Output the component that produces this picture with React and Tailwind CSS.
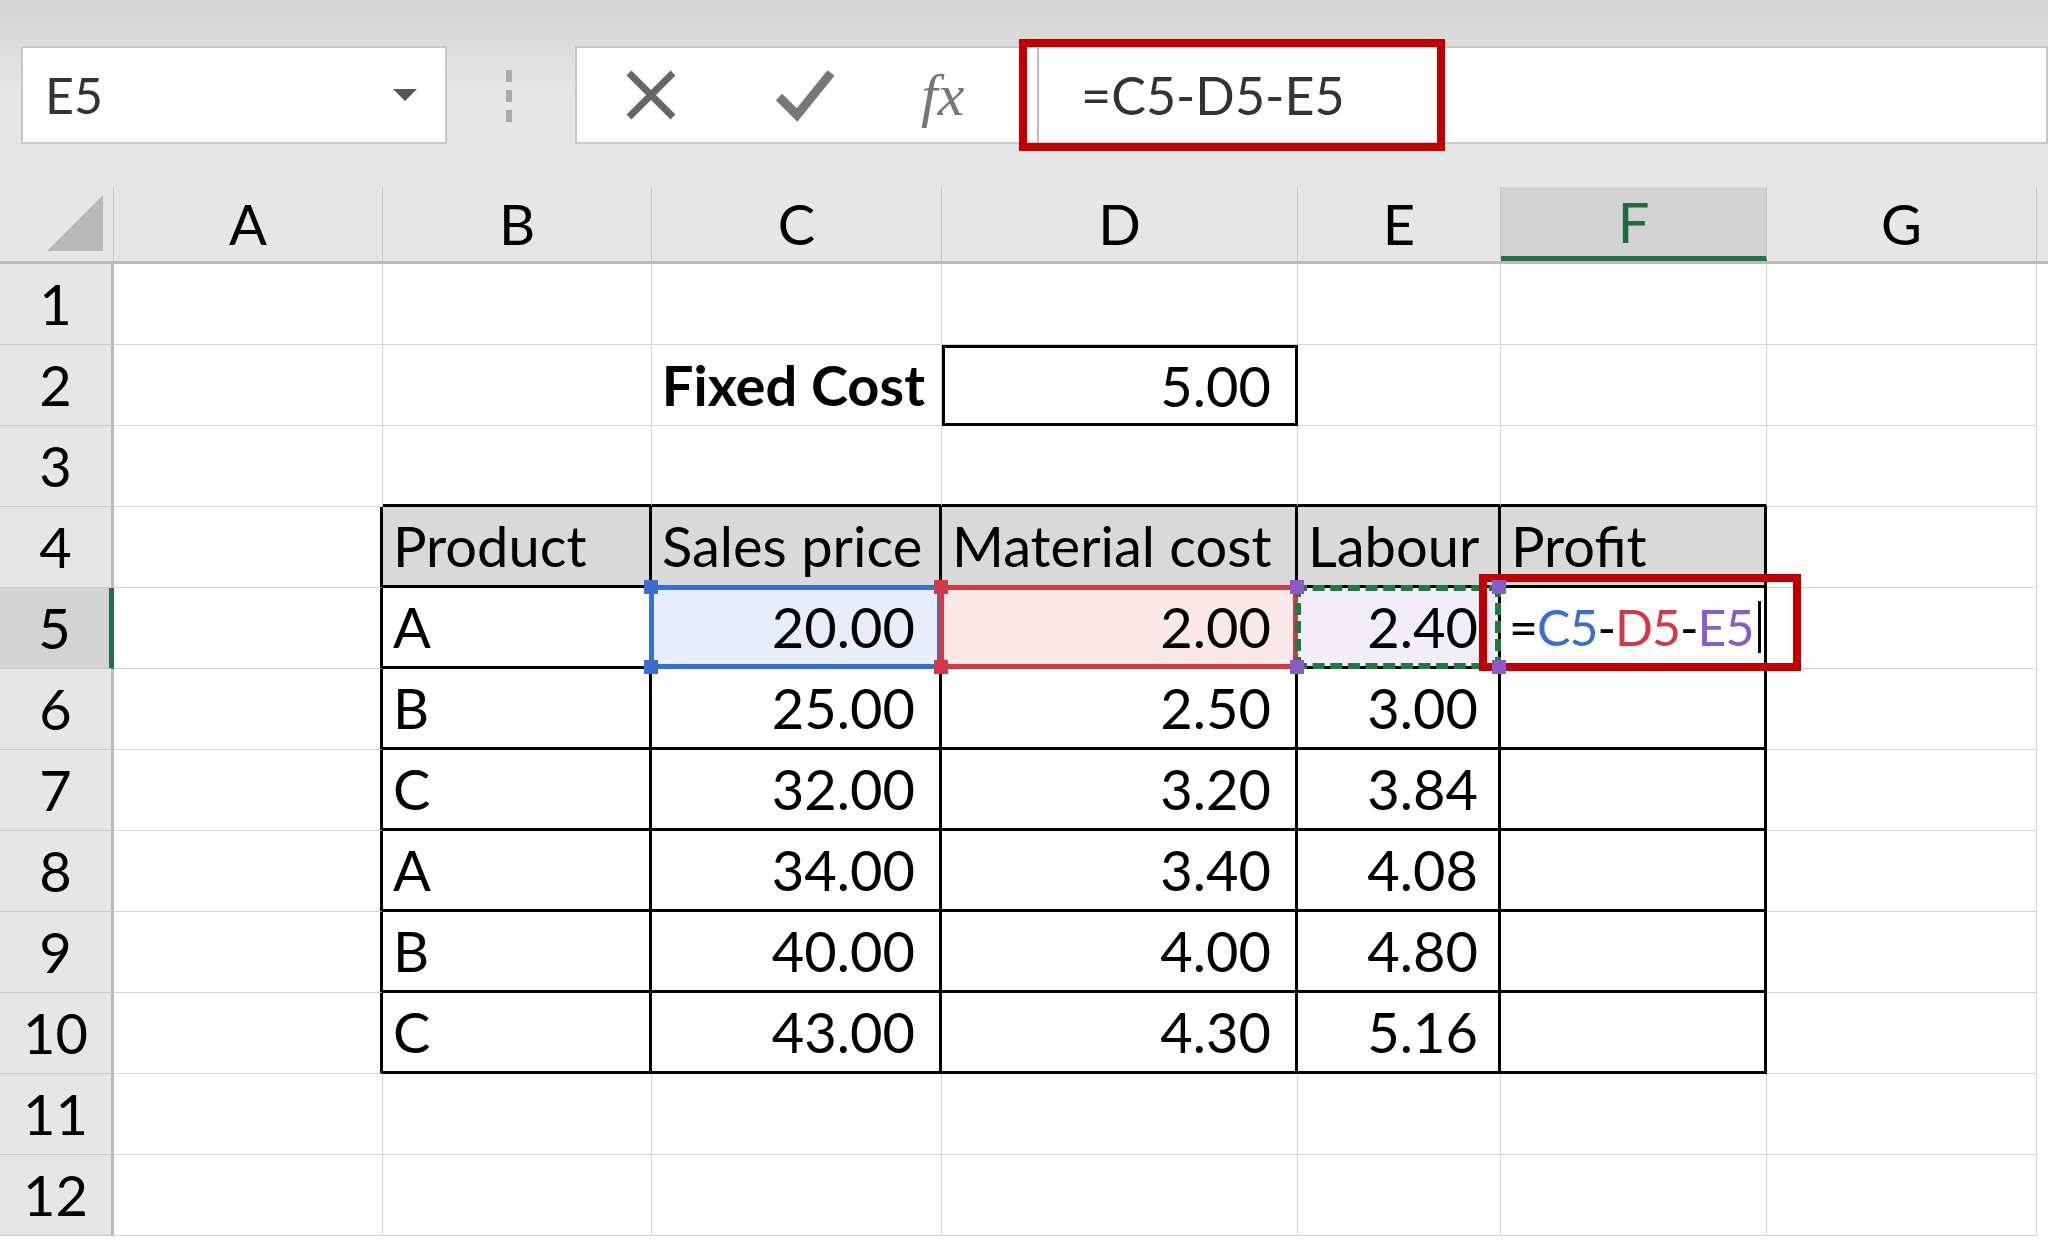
import React from "react";

const cols = [
  { k: "A", w: "w-[269px]" },
  { k: "B", w: "w-[269px]" },
  { k: "C", w: "w-[290px]" },
  { k: "D", w: "w-[356px]" },
  { k: "E", w: "w-[203px]" },
  { k: "F", w: "w-[266px]" },
  { k: "G", w: "w-[270px]" },
];

const data = [
  ["A", "20.00", "2.00", "2.40"],
  ["B", "25.00", "2.50", "3.00"],
  ["C", "32.00", "3.20", "3.84"],
  ["A", "34.00", "3.40", "4.08"],
  ["B", "40.00", "4.00", "4.80"],
  ["C", "43.00", "4.30", "5.16"],
];

const Handle = ({ pos, color }) => (
  <span className={`absolute z-20 w-[14px] h-[14px] ${pos} ${color}`} />
);

const cellContent = (r, c) => {
  if (r === 2 && c === "C") return <span className="ml-auto pr-[16px] font-bold">Fixed Cost</span>;
  if (r === 2 && c === "D") return <span className="ml-auto pr-[24px]">5.00</span>;
  if (r === 4) {
    const h = { B: "Product", C: "Sales price", D: "Material cost", E: "Labour", F: "Profit" }[c];
    if (h) return <span className="pl-[10px] whitespace-nowrap">{h}</span>;
  }
  if (r >= 5 && r <= 10) {
    const d = data[r - 5];
    if (c === "B") return <span className="pl-[10px]">{d[0]}</span>;
    if (c === "C") return <span className="ml-auto pr-[24px]">{d[1]}</span>;
    if (c === "D") return <span className="ml-auto pr-[24px]">{d[2]}</span>;
    if (c === "E") return <span className="ml-auto pr-[20px]">{d[3]}</span>;
  }
  return null;
};

const inTable = (r, c) => r >= 4 && r <= 10 && "BCDEF".includes(c);

const Cell = ({ r, c, w }) => {
  let cls = "border-r border-b border-[#d4d4d4]";
  if (inTable(r, c)) cls = "border-r-[3px] border-b-[3px] border-black";
  else if (r === 3 && "BCDEF".includes(c)) cls = "border-r border-[#d4d4d4] border-b-[3px] border-b-black";
  else if (c === "A" && r >= 4 && r <= 10) cls = "border-b border-[#d4d4d4] border-r-[3px] border-r-black";
  if (r === 2 && c === "D") cls = "border-[3px] border-black";
  let bg = "bg-white";
  if (r === 4 && inTable(r, c)) bg = "bg-[#d9d9d9]";
  if (r === 5 && c === "C") bg = "bg-[#e8eef9]";
  if (r === 5 && c === "D") bg = "bg-[#fbe9ea]";
  if (r === 5 && c === "E") bg = "bg-[#f1eef9]";
  const z = r === 5 && c === "F" ? "z-10" : "";
  return (
    <div className={`relative flex items-center h-full shrink-0 ${w} ${cls} ${bg} ${z}`}>
      {cellContent(r, c)}
      {r === 5 && c === "C" && (
        <>
          <div className="absolute inset-[-3px] border-[5px] border-[#3a6fd1]" />
          <Handle pos="-top-[8px] -left-[8px]" color="bg-[#3a6fd1]" />
          <Handle pos="-bottom-[8px] -left-[8px]" color="bg-[#3a6fd1]" />
        </>
      )}
      {r === 5 && c === "D" && (
        <>
          <div className="absolute inset-[-3px] border-[5px] border-[#d13a45]" />
          <Handle pos="-top-[8px] -left-[8px]" color="bg-[#d13a45]" />
          <Handle pos="-bottom-[8px] -left-[8px]" color="bg-[#d13a45]" />
        </>
      )}
      {r === 5 && c === "E" && (
        <>
          <div className="absolute inset-[-3px] border-[6px] border-dashed border-[#1f7a3e]" />
          <Handle pos="-top-[8px] -left-[8px]" color="bg-[#8a5cc8]" />
          <Handle pos="-bottom-[8px] -left-[8px]" color="bg-[#8a5cc8]" />
          <Handle pos="-top-[8px] -right-[8px]" color="bg-[#8a5cc8]" />
          <Handle pos="-bottom-[8px] -right-[8px]" color="bg-[#8a5cc8]" />
        </>
      )}
      {r === 5 && c === "F" && (
        <>
          <span className="pl-[8px] whitespace-nowrap text-[50px] tracking-[-1px] flex items-center">
            =<span className="text-[#3a6fd1]">C5</span>-<span className="text-[#d13a45]">D5</span>-<span className="text-[#8a5cc8]">E5</span>
            <span className="ml-[4px] w-[3px] h-[52px] bg-black" />
          </span>
          <div className="absolute -left-[22px] -top-[14px] w-[322px] h-[97px] border-[8px] border-[#c00000]" />
        </>
      )}
    </div>
  );
};

export default function App() {
  return (
    <div className="w-[2048px] h-[1257px] overflow-hidden bg-white text-[56px] text-black" style={{ fontFamily: "Lato, 'Open Sans', sans-serif" }}>
      <div className="h-[187px] bg-gradient-to-b from-[#d4d4d4] via-[#e6e6e6] to-[#e6e6e6] relative">
        <div className="absolute left-[21px] top-[46px] w-[426px] h-[98px] bg-white border-2 border-[#c8c8c8] flex items-center px-[22px] text-[50px] text-[#333]">
          E5
          <span className="ml-auto mr-[6px] border-x-[12px] border-x-transparent border-t-[12px] border-t-[#555]" />
        </div>
        <div className="absolute left-[506px] top-[70px] flex flex-col gap-[8px]">
          <span className="w-[6px] h-[12px] bg-[#aaa]" />
          <span className="w-[6px] h-[12px] bg-[#aaa]" />
          <span className="w-[6px] h-[12px] bg-[#aaa]" />
        </div>
        <div className="absolute left-[575px] top-[46px] right-0 h-[98px] bg-white border-2 border-[#c8c8c8] flex items-center">
          <svg className="ml-[46px]" width="56" height="56" viewBox="0 0 56 56"><path d="M6 6 L50 50 M50 6 L6 50" stroke="#666" strokeWidth="7" /></svg>
          <svg className="ml-[96px]" width="60" height="56" viewBox="0 0 60 56"><path d="M4 30 L22 48 L56 6" stroke="#777" strokeWidth="9" fill="none" /></svg>
          <span className="ml-[86px] italic text-[60px] text-[#777]" style={{ fontFamily: "'Liberation Serif', serif" }}>fx</span>
        </div>
        <div className="absolute left-[1019px] top-[39px] w-[426px] h-[112px] border-[8px] border-[#c00000] flex items-center">
          <span className="w-[2px] h-full bg-[#bbb] ml-[10px]" />
          <span className="ml-[42px] text-[52px] text-[#333]">=C5-D5-E5</span>
        </div>
      </div>
      <div className="flex h-[77px] bg-[#e6e6e6] border-b-[3px] border-[#bbb]">
        <div className="w-[114px] shrink-0 border-r border-[#c8c8c8] flex items-end justify-end p-[10px]">
          <span className="border-l-[56px] border-l-transparent border-b-[56px] border-b-[#b8b8b8]" />
        </div>
        {cols.map((c) => (
          <div key={c.k} className={`${c.w} shrink-0 flex items-center justify-center border-r border-[#c8c8c8] ${c.k === "F" ? "bg-[#d2d2d2] text-[#1f6b3a] border-b-[5px] border-b-[#217346]" : ""}`}>
            {c.k}
          </div>
        ))}
      </div>
      {Array.from({ length: 12 }, (_, i) => i + 1).map((r) => (
        <div key={r} className={`flex h-[81px] ${r === 5 ? "relative z-10" : ""}`}>
          <div className={`w-[114px] shrink-0 flex items-center justify-center border-b border-[#c8c8c8] ${r === 5 ? "bg-[#d2d2d2] border-r-[5px] border-r-[#217346]" : "bg-[#e6e6e6] border-r-[3px] border-r-[#bbb]"}`}>
            {r}
          </div>
          {cols.map((c) => (
            <Cell key={c.k} r={r} c={c.k} w={c.w} />
          ))}
        </div>
      ))}
    </div>
  );
}
